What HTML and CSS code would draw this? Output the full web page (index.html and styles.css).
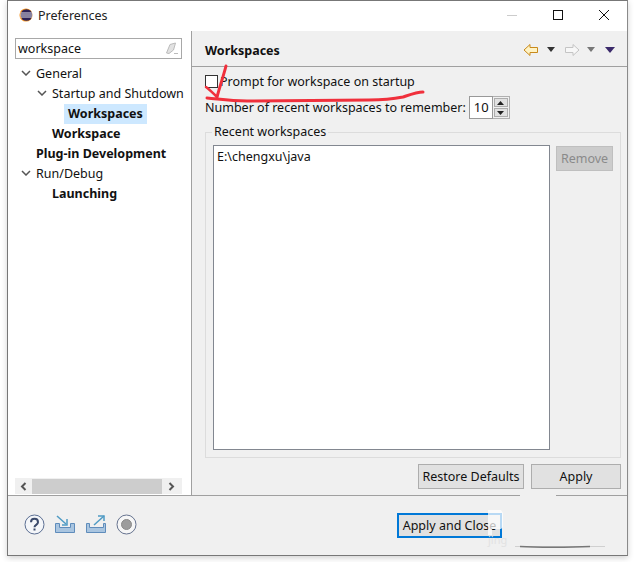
FILE: index.html
```html
<!DOCTYPE html>
<html lang="en">
<head>
<meta charset="utf-8">
<title>Preferences</title>
<link rel="stylesheet" href="styles.css">
</head>
<body>
<div class="window">
  <header class="titlebar">
    <svg class="app-icon" width="14" height="14" viewBox="0 0 16 16"><circle cx="8" cy="8" r="7.500" fill="#f7941e"/><circle cx="8.500" cy="8" r="6.700" fill="#2c2255"/><path d="M1.500 5.700h14M1 8h15M1.500 10.300h14" stroke="#fff" stroke-width="1"/></svg>
    <span class="title">Preferences</span>
    <div class="win-controls">
      <svg width="12" height="12" viewBox="0 0 12 12"><path d="M1 6.500h10" stroke="#ccc"/></svg>
      <svg width="12" height="12" viewBox="0 0 12 12"><rect x="1.500" y="1.500" width="9" height="9" fill="none" stroke="#111"/></svg>
      <svg width="12" height="12" viewBox="0 0 12 12"><path d="M1 1l10 10M11 1L1 11" stroke="#111"/></svg>
    </div>
  </header>
  <div class="content">
    <aside class="sidebar">
      <div class="search">
        <span class="search-text">workspace</span>
        <svg width="14" height="13" viewBox="0 0 14 13"><path d="M1.500 11L5 2.500 10.500 1 8.500 8 4 11.500z" fill="#e2e2e2" stroke="#bbb"/><path d="M9 11.500h4" stroke="#bbb"/></svg>
      </div>
      <ul class="tree">
        <li class="row lvl0"><svg class="caret" width="10" height="6" viewBox="0 0 10 6"><path d="M1 1l4 4 4-4" fill="none" stroke="#555" stroke-width="1.500"/></svg>General</li>
        <li class="row lvl1"><svg class="caret" width="10" height="6" viewBox="0 0 10 6"><path d="M1 1l4 4 4-4" fill="none" stroke="#555" stroke-width="1.500"/></svg>Startup and Shutdown</li>
        <li class="row lvl2 bold"><span class="selected">Workspaces</span></li>
        <li class="row lvl1 bold">Workspace</li>
        <li class="row lvl0 bold">Plug-in Development</li>
        <li class="row lvl0"><svg class="caret" width="10" height="6" viewBox="0 0 10 6"><path d="M1 1l4 4 4-4" fill="none" stroke="#555" stroke-width="1.500"/></svg>Run/Debug</li>
        <li class="row lvl1 bold">Launching</li>
      </ul>
      <div class="hscroll">
        <svg width="17" height="15" viewBox="0 0 17 15"><path d="M10.500 4l-3.500 3.500 3.500 3.500" fill="none" stroke="#555" stroke-width="2"/></svg>
        <div class="thumb"></div>
        <svg width="19" height="15" viewBox="0 0 19 15"><path d="M7.500 4l3.500 3.500-3.500 3.500" fill="none" stroke="#555" stroke-width="2"/></svg>
      </div>
    </aside>
    <main class="main">
      <div class="page-head">
        <h1 class="page-title">Workspaces</h1>
        <div class="nav-tools">
          <svg class="back" width="16" height="14" viewBox="0 0 16 14"><path d="M1 7l6-5.500v3h7.500v5H7v3z" fill="#fff3c4" stroke="#c98a1b"/></svg>
          <svg class="drop-a" width="8" height="5" viewBox="0 0 8 5"><path d="M0 0h8L4 5z" fill="#333"/></svg>
          <svg class="forward" width="16" height="14" viewBox="0 0 16 14"><path d="M15 7L9 1.500v3H1.500v5H9v3z" fill="#f7f7f7" stroke="#c4c4c4"/></svg>
          <svg class="drop-b" width="8" height="5" viewBox="0 0 8 5"><path d="M0 0h8L4 5z" fill="#777"/></svg>
          <svg class="menu-drop" width="10" height="6" viewBox="0 0 10 6"><path d="M0 0h10L5 6z" fill="#3b2a6b"/></svg>
        </div>
      </div>
      <div class="page-body">
        <label class="check-row"><span class="checkbox"></span>Prompt for workspace on startup</label>
        <div class="number-row">
          <span>Number of recent workspaces to remember:</span>
          <span class="spin-input">10</span>
          <span class="spin">
            <span class="spin-btn"><svg width="7" height="4" viewBox="0 0 7 4"><path d="M0 4h7L3.500 0z" fill="#222"/></svg></span>
            <span class="spin-btn"><svg width="7" height="4" viewBox="0 0 7 4"><path d="M0 0h7L3.500 4z" fill="#222"/></svg></span>
          </span>
        </div>
        <fieldset class="group">
          <legend class="legend">Recent workspaces</legend>
          <div class="list">E:\chengxu\java</div>
          <button class="btn remove" disabled>Remove</button>
        </fieldset>
        <div class="page-actions">
          <button class="btn restore">Restore Defaults</button>
          <button class="btn apply">Apply</button>
        </div>
      </div>
    </main>
  </div>
  <footer class="footer">
    <div class="foot-icons">
      <svg width="21" height="21" viewBox="0 0 21 21"><circle cx="10.500" cy="10.500" r="9.500" fill="#f4f6f9" stroke="#5c6f93"/><path d="M7 8.200c0-4.500 7-4.500 7 0 0 2.600-3.500 2.600-3.500 5" fill="none" stroke="#3b4a6b" stroke-width="2"/><rect x="9.500" y="14.500" width="2" height="2" fill="#3b4a6b"/></svg>
      <svg width="22" height="20" viewBox="0 0 22 20"><path d="M3 2l9 8" stroke="#4f9bc4" stroke-width="1.500"/><path d="M13 5v6H8" fill="none" stroke="#4f9bc4" stroke-width="1.500"/><path d="M1.500 9.500v9h19v-9h-4v4h-11v-4z" fill="#a9c5e0" stroke="#5f8cbb"/></svg>
      <svg width="22" height="20" viewBox="0 0 22 20"><path d="M9 11l10-9" stroke="#4f9bc4" stroke-width="1.500"/><path d="M13 2h6v5" fill="none" stroke="#4f9bc4" stroke-width="1.500"/><path d="M1.500 9.500v9h19v-9h-2v4h-14v-4z" fill="#a9c5e0" stroke="#5f8cbb"/></svg>
      <svg width="21" height="21" viewBox="0 0 21 21"><circle cx="10.500" cy="10.500" r="9.500" fill="#f6f6f6" stroke="#66738f"/><circle cx="10.500" cy="10.500" r="5" fill="#9c9c9c" stroke="#8a8a8a"/></svg>
    </div>
    <button class="btn primary">Apply and Close</button>
  </footer>
</div>
<svg class="overlay" width="635" height="562" viewBox="0 0 635 562">
  <rect x="520" y="494" width="36" height="3" fill="#f0f0f0"/>
  <path d="M515 546.500h90" stroke="#d0d0d0"/>
  <path d="M520 546.500c15 1 50 1 70 0" stroke="#777" stroke-width="1.500" fill="none"/>
  <path d="M488 510h13l2 3v14l-2 2h-9v6h-4z" fill="#fff" fill-opacity=".72"/>
  <path d="M226 66c-2 8-6 20-9 31" fill="none" stroke="#f0303c" stroke-width="3" stroke-linecap="round"/>
  <path d="M206 87c4 3 8 7 11 10" fill="none" stroke="#f0303c" stroke-width="2.500" stroke-linecap="round"/>
  <path d="M207 98c12 1 22 3 40 3 40 0 80-1 122-1 14 0 24-1 34-3 6-2 14-5 20-5" fill="none" stroke="#f0303c" stroke-width="3" stroke-linecap="round"/>
</svg>
<span class="watermark">jing</span>
</body>
</html>
```
FILE: styles.css
```css
* { box-sizing: border-box; }
html, body { margin: 0; padding: 0; }
body {
  width: 635px; height: 562px; overflow: hidden; background: #fff; position: relative;
  font-family: "Noto Sans", sans-serif; font-size: 12.5px; color: #111;
}
.window {
  margin-left: 7px; width: 621px; height: 556px;
  background: #f0f0f0; border: 1px solid #777; border-right-color: #8a8a8a;
  box-shadow: 0 2px 6px rgba(0,0,0,.18);
  display: flex; flex-direction: column;
}
.titlebar { height: 30px; background: #fff; display: flex; align-items: center; padding: 0 0 2px 11px; flex: none; }
.app-icon { margin-right: 5px; }
.title { font-size: 12.5px; color: #222; }
.win-controls { margin-left: auto; display: flex; gap: 34px; padding-right: 17px; }
.content { height: 465px; display: flex; flex: none; border-bottom: 1px solid #a0a0a0; }
.sidebar { width: 184px; background: #fff; border-right: 1px solid #a0a0a0; padding: 7px 9px 0 7px; display: flex; flex-direction: column; flex: none; }
.search { height: 21px; border: 1px solid #a8a8a8; display: flex; align-items: center; justify-content: space-between; padding: 0 2px; }
.tree { list-style: none; margin: 4px 0 0; padding: 0; flex: 1; white-space: nowrap; }
.row { height: 20px; display: flex; align-items: center; }
.lvl0 { padding-left: 21px; }
.lvl1 { padding-left: 37px; }
.lvl2 { padding-left: 49px; }
.caret { flex: none; margin-left: -15px; margin-right: 5px; }
.bold { font-weight: 700; }
.selected { background: #cde8ff; padding: 0 4px; height: 20px; line-height: 20px; margin-top: 2px; flex: none; }
.hscroll { height: 16px; background: #f0f0f0; display: flex; align-items: center; margin-bottom: 1px; }
.thumb { width: 130px; height: 15px; background: #cdcdcd; }
.main { flex: 1; display: flex; flex-direction: column; min-width: 0; }
.page-head { height: 36px; border-bottom: 1px solid #a0a0a0; display: flex; align-items: center; justify-content: space-between; padding: 4px 12px 2px 13px; flex: none; }
.page-title { font-size: 12.5px; font-weight: 700; margin: 2px 0 0; }
.nav-tools { display: flex; align-items: center; }
.drop-a { margin-left: 8px; }
.forward { margin-left: 9px; }
.drop-b { margin-left: 7px; }
.menu-drop { margin-left: 10px; }
.page-body { padding: 0 6px 0 13px; flex: 1; display: flex; flex-direction: column; }
.check-row { display: flex; align-items: center; height: 18px; margin-top: 5px; }
.checkbox { width: 13px; height: 13px; border: 1px solid #333; background: #fff; margin-right: 2px; flex: none; }
.number-row { display: flex; align-items: center; height: 23px; margin-top: 6px; }
.spin-input { width: 24px; height: 23px; margin-left: 3px; background: #fff; border: 1px solid #999; padding-left: 4px; line-height: 20px; font-size: 13px; }
.spin { width: 17px; height: 23px; background: #f0f0f0; border: 1px solid #b0b0b0; border-left: 0; display: flex; flex-direction: column; gap: 1px; padding: 1px; }
.spin-btn { flex: 1; background: #e1e1e1; border: 1px solid #adadad; display: flex; align-items: center; justify-content: center; }
.group { margin: 5px 0 0; padding: 5px 7px 7px; border: 1px solid #dcdcdc; height: 334px; min-width: 0; display: flex; gap: 6px; align-items: flex-start; }
.legend { padding: 0 2px; margin-left: -1px; line-height: 16px; }
.list { width: 337px; height: 305px; background: #fff; border: 1px solid #828790; padding: 2px 3px; flex: none; }
.btn { font: inherit; color: #111; background: #e1e1e1; border: 1px solid #adadad; padding: 0; }
.remove { width: 57px; height: 25px; margin-top: 1px; background: #ccc; color: #8a8a8a; border-color: #bfbfbf; }
.page-actions { display: flex; justify-content: flex-end; gap: 7px; margin-top: 6px; }
.restore { width: 106px; height: 25px; }
.apply { width: 90px; height: 25px; }
.footer { flex: 1; display: flex; align-items: center; padding-left: 16px; }
.foot-icons { display: flex; gap: 9px; align-items: center; margin-top: -3px; }
.primary { width: 105px; height: 25px; border: 2px solid #0078d7; margin-left: 260px; }
.overlay { position: absolute; left: 0; top: 0; pointer-events: none; }
.watermark { position: absolute; left: 488px; top: 533px; font-size: 11px; line-height: 14px; color: #e2e2e2; }
```
